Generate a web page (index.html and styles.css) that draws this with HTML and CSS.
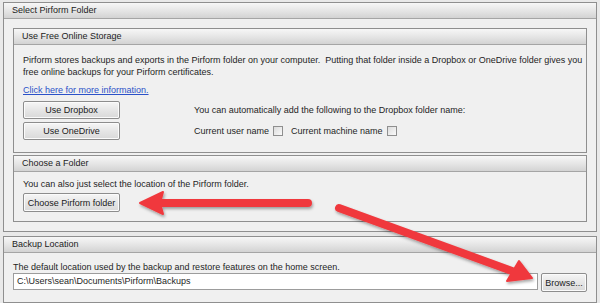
FILE: index.html
```html
<!DOCTYPE html>
<html>
<head>
<meta charset="utf-8">
<link rel="stylesheet" href="styles.css">
</head>
<body>
<div class="page">
  <section class="group outer">
    <div class="hdr">Select Pirform Folder</div>
    <div class="outer-body">
      <section class="group inner">
        <div class="hdr">Use Free Online Storage</div>
        <div class="body body1">
          <p class="desc">Pirform stores backups and exports in the Pirform folder on your computer.&nbsp; Putting that folder inside a Dropbox or OneDrive folder gives you free online backups for your Pirform certificates.</p>
          <a class="link" href="#">Click here for more information.</a>
          <div class="cloud">
            <div class="btns">
              <button class="btn">Use Dropbox</button>
              <button class="btn">Use OneDrive</button>
            </div>
            <div class="opts">
              <div class="opt-line">You can automatically add the following to the Dropbox folder name:</div>
              <div class="opt-line checks">
                <span>Current user name</span><span class="cb"></span>
                <span class="lbl2">Current machine name</span><span class="cb"></span>
              </div>
            </div>
          </div>
        </div>
      </section>
      <section class="group inner">
        <div class="hdr">Choose a Folder</div>
        <div class="body body2">
          <div class="line">You can also just select the location of the Pirform folder.</div>
          <button class="btn">Choose Pirform folder</button>
        </div>
      </section>
    </div>
  </section>
  <section class="group outer backup">
    <div class="hdr">Backup Location</div>
    <div class="body body3">
      <div class="line">The default location used by the backup and restore features on the home screen.</div>
      <div class="pathrow">
        <div class="path">C:\Users\sean\Documents\Pirform\Backups</div>
        <button class="btn browse">Browse...</button>
      </div>
    </div>
  </section>
  <svg class="arrows" width="600" height="303" viewBox="0 0 600 303">
    <defs>
      <filter id="sh" x="-10%" y="-50%" width="120%" height="200%">
        <feDropShadow dx="1" dy="2" stdDeviation="1.5" flood-color="#000" flood-opacity="0.35"/>
      </filter>
    </defs>
    <g filter="url(#sh)" fill="#f0393d" stroke="#f0393d" stroke-linecap="round" stroke-linejoin="round">
      <line x1="308" y1="203" x2="160" y2="203" stroke-width="8"/>
      <polygon points="140,203 163,192 160,203 163,214" stroke-width="2"/>
      <line x1="339" y1="208" x2="512" y2="271" stroke-width="8"/>
      <polygon points="532,278 507,281 513,271 519,261" stroke-width="2"/>
    </g>
  </svg>
</div>
</body>
</html>
```
FILE: styles.css
```css
* { box-sizing: border-box; }
html, body { margin: 0; padding: 0; }
body {
  width: 600px;
  height: 303px;
  overflow: hidden;
  background: #e9e9e9;
  font-family: "Liberation Sans", Tahoma, sans-serif;
  font-size: 9px;
  color: #1e1e1e;
}
.page {
  position: relative;
  width: 600px;
  height: 303px;
  padding: 2px 3px 0 3px;
}
.group {
  border: 1px solid #8f8f8f;
  background: #f0f0f0;
}
.hdr {
  height: 16px;
  line-height: 15px;
  padding-left: 8px;
  background: linear-gradient(#f7f7f7, #e4e4e4 55%, #d3d3d3);
  border-bottom: 1px solid #a5a5a5;
  font-size: 9px;
  color: #1c1c1c;
}
.outer-body {
  padding: 9px 9px 9px 9px;
  display: flex;
  flex-direction: column;
  gap: 2px;
}
.body {
  padding: 9px;
}
.body1 { padding-bottom: 12px; }
.desc {
  margin: 0;
  line-height: 12px;
  width: 560px;
}
.link {
  display: block;
  margin-top: 6px;
  color: #2b51c8;
  text-decoration: underline;
  line-height: 12px;
}
.cloud {
  display: flex;
  margin-top: 5px;
  gap: 74px;
}
.btns {
  display: flex;
  flex-direction: column;
  gap: 3px;
}
.btn {
  font-family: inherit;
  font-size: 9px;
  color: #1a1a1a;
  white-space: nowrap;
  width: 97px;
  height: 18px;
  padding: 0;
  border: 1px solid #8d8d8d;
  border-radius: 2px;
  background: linear-gradient(#f6f6f6, #e6e6e6 50%, #d9d9d9);
  box-shadow: inset 0 0 0 1px #fbfbfb;
}
.opts {
  display: flex;
  flex-direction: column;
  gap: 9px;
  padding-top: 3px;
}
.opt-line { line-height: 12px; }
.checks { display: flex; align-items: center; }
.cb {
  display: inline-block;
  width: 10px;
  height: 10px;
  border: 1px solid #8f8f8f;
  background: linear-gradient(135deg, #dcdcdc, #fafafa);
  margin-left: 4px;
}
.lbl2 { margin-left: 8px; }
.body2 { padding-top: 6px; padding-bottom: 9px; }
.line { line-height: 12px; }
.body2 .btn { margin-top: 3px; height: 19px; }
.backup { margin-top: 4px; height: 67px; }
.body3 { padding: 8px 8px 0 9px; }
.pathrow { display: flex; gap: 3px; align-items: flex-start; }
.path {
  width: 525px;
  height: 17px;
  line-height: 15px;
  padding-left: 3px;
  border: 1px solid #9c9c9c;
  background: #ffffff;
}
.btn.browse { width: 46px; height: 19px; }
.arrows {
  position: absolute;
  left: 0;
  top: 0;
  pointer-events: none;
}
```
